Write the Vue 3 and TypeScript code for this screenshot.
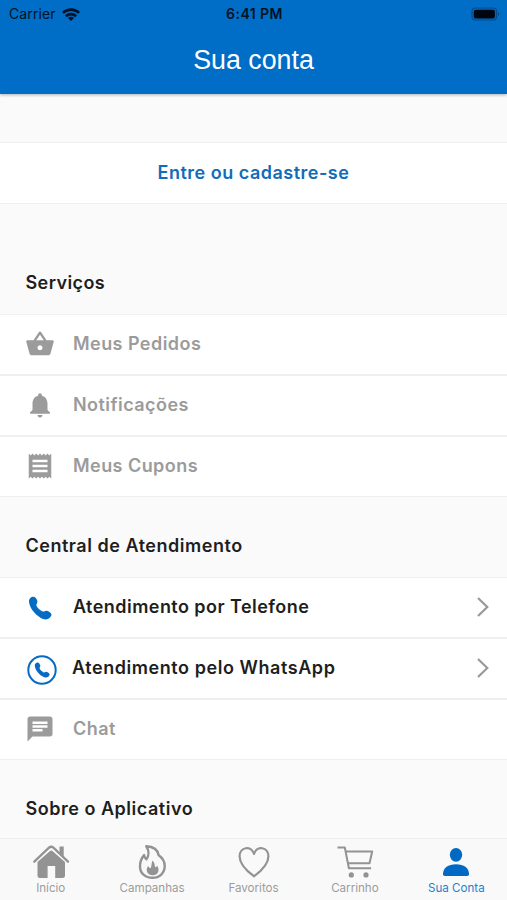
<script setup lang="ts">
type IconName = 'basket' | 'bell' | 'receipt' | 'phone' | 'whatsapp' | 'chat'

interface Row {
  label: string
  icon: IconName
  enabled: boolean
}

interface Section {
  title: string
  key: string
  rows: Row[]
}

const sections: Section[] = [
  {
    title: 'Serviços',
    key: 'services',
    rows: [
      { label: 'Meus Pedidos', icon: 'basket', enabled: false },
      { label: 'Notificações', icon: 'bell', enabled: false },
      { label: 'Meus Cupons', icon: 'receipt', enabled: false },
    ],
  },
  {
    title: 'Central de Atendimento',
    key: 'support',
    rows: [
      { label: 'Atendimento por Telefone', icon: 'phone', enabled: true },
      { label: 'Atendimento pelo WhatsApp', icon: 'whatsapp', enabled: true },
      { label: 'Chat', icon: 'chat', enabled: false },
    ],
  },
  { title: 'Sobre o Aplicativo', key: 'about', rows: [] },
]

const glyphs: Partial<Record<IconName, string>> = {
  basket:
    'M17.21 9l-4.38-6.56c-.19-.28-.51-.42-.83-.42-.32 0-.64.14-.83.43L6.79 9H2c-.55 0-1 .45-1 1 0 .09.01.18.04.27l2.54 9.27c.23.84 1 1.46 1.92 1.46h13c.92 0 1.69-.62 1.93-1.46l2.54-9.27L23 10c0-.55-.45-1-1-1h-4.79zM9 9l3-4.4L15 9H9zm3 8c-1.1 0-2-.9-2-2s.9-2 2-2 2 .9 2 2-.9 2-2 2z',
  bell:
    'M12 22c1.1 0 2-.9 2-2h-4c0 1.1.89 2 2 2zm6-6v-5c0-3.07-1.64-5.64-4.5-6.32V4c0-.83-.67-1.5-1.5-1.5s-1.5.67-1.5 1.5v.68C7.63 5.36 6 7.92 6 11v5l-2 2v1h16v-1l-2-2z',
  receipt:
    'M18 17H6v-2h12v2zm0-4H6v-2h12v2zm0-4H6V7h12v2zM3 22l1.5-1.5L6 22l1.5-1.5L9 22l1.5-1.5L12 22l1.5-1.5L15 22l1.5-1.5L18 22l1.5-1.5L21 22V2l-1.5 1.5L18 2l-1.5 1.5L15 2l-1.5 1.5L12 2l-1.5 1.5L9 2 7.5 3.5 6 2 4.5 3.500 3 2v20z',
  chat:
    'M20 2H4c-1.1 0-1.99.9-1.99 2L2 22l4-4h14c1.1 0 2-.9 2-2V4c0-1.1-.9-2-2-2zM6 9h12v2H6V9zm8 5H6v-2h8v2zm4-6H6V6h12v2z',
}

const handset =
  'M1 5.200C.9 2.700 3.200.6 5.400.7c1.600.1 2.400 1.200 3.100 2.400.8 1.400 1.200 2.500.6 3.900-.5 1.200-1.100 1.700-.5 3 .9 1.800 3.300 4.200 5.500 5.300 1.400.7 2 .1 3.200-.4 1.300-.5 2.500 0 3.800.8 1.500.9 2.500 1.900 2.300 3.400-.3 2.200-2.800 4.300-5.700 4.300C11.700 23.200 1.300 13.700 1 5.200z'

const tabs = [
  { label: 'Início', icon: 'home' },
  { label: 'Campanhas', icon: 'flame' },
  { label: 'Favoritos', icon: 'heart' },
  { label: 'Carrinho', icon: 'cart' },
  { label: 'Sua Conta', icon: 'person', active: true },
]
</script>

<template>
  <div class="screen">
    <header class="header">
      <div class="status">
        <div class="carrier">
          <span>Carrier</span>
          <svg class="wifi" viewBox="0 0 18 13" fill="none" stroke="currentColor" stroke-width="2.700">
            <path d="M.9 4.900a11.600 11.600 0 0 1 16.200 0" />
            <path d="M3.900 8.300a7.300 7.300 0 0 1 10.200 0" />
            <path d="M9 13L6 10a4.200 4.200 0 0 1 6 0z" fill="currentColor" stroke="none" />
          </svg>
        </div>
        <span class="time">6:41 PM</span>
        <div class="power">
          <svg class="battery" viewBox="0 0 29 14">
            <rect x="1" y="1" width="24.500" height="12" rx="3.500" fill="none" stroke="#064b89" stroke-width="1.200" />
            <rect x="2.700" y="2.700" width="21.200" height="8.800" rx="2" fill="#000610" />
            <path d="M27 5v4c1.600-.6 1.600-3.400 0-4z" fill="#064b89" />
          </svg>
        </div>
      </div>
      <h1 class="title">Sua conta</h1>
    </header>

    <main class="content">
      <button class="login"><span>Entre ou cadastre-se</span></button>

      <section v-for="section in sections" :key="section.key" :class="section.key">
        <h2 class="heading"><span>{{ section.title }}</span></h2>
        <ul v-if="section.rows.length" class="rows">
          <li v-for="row in section.rows" :key="row.label" class="row" :class="[row.icon, { enabled: row.enabled }]">
            <span class="icon">
              <svg v-if="row.icon === 'phone'" class="phone-icon" viewBox="0 0 24 24">
                <path :d="handset" fill="currentColor" />
              </svg>
              <svg v-else-if="row.icon === 'whatsapp'" class="ring-icon" viewBox="0 0 30 30">
                <circle cx="15" cy="15" r="13.700" fill="none" stroke="currentColor" stroke-width="2" />
                <path :d="handset" transform="translate(7.100 7.100) scale(.66)" fill="currentColor" />
              </svg>
              <svg v-else class="glyph" viewBox="0 0 24 24">
                <path :d="glyphs[row.icon]" fill="currentColor" />
              </svg>
            </span>
            <span class="label">{{ row.label }}</span>
            <svg v-if="row.enabled" class="chevron" viewBox="0 0 12 20" fill="none" stroke="currentColor" stroke-width="2.200">
              <path d="M1 1l9.300 9L1 19" />
            </svg>
          </li>
        </ul>
      </section>
    </main>

    <nav class="tabs">
      <a v-for="tab in tabs" :key="tab.label" class="tab" :class="[tab.icon, { active: tab.active }]">
        <svg class="tab-icon" viewBox="0 0 38 36">
          <g v-if="tab.icon === 'home'">
            <path d="M2.300 18.700L17 4.700q2.200-2 4.400 0L36 18.700" fill="none" stroke="currentColor" stroke-width="2.300" stroke-linecap="round" />
            <path d="M27.500 3.400h4.200v10l-4.200-4z" fill="currentColor" />
            <path d="M5.500 19L18 8q1.200-1 2.400 0L33 19v13.500q0 2.500-2.500 2.500h-7.300V23h-7.600v12H8q-2.500 0-2.500-2.500z" fill="currentColor" />
          </g>
          <g v-else-if="tab.icon === 'flame'">
            <path d="M13.200 3.200C21.500 3.500 25 8 25.700 12.300c4.600 3.200 6 7.200 6 10.800 0 7-5.100 11.700-12.200 11.700-7.300 0-12.500-4.600-12.500-11.400 0-4.500 1.500-8.300 4.100-11.300.3 2 .9 3.200 2.300 4.200 2.800-3.800 2.700-9-.2-13.100z" fill="none" stroke="currentColor" stroke-width="2.400" stroke-linejoin="round" />
            <path d="M19.400 17.400c3.200 3 1.700 5.400 3.300 7l1.500-1.700c3 4.900.7 9.500-4.400 9.500s-7.900-5-4.700-9.300c.7.900 1.500 2 2.400 2.400 1.300-2 .8-4.900 1.900-7.900z" fill="currentColor" />
          </g>
          <path v-else-if="tab.icon === 'heart'" d="M19 33.300C15 30.300 4.600 22.600 4.600 13.400c0-9.700 11.600-11.200 14.400-2.500C21.800 2.200 33.400 3.700 33.400 13.400 33.400 22.600 23 30.300 19 33.300z" fill="none" stroke="currentColor" stroke-width="2.200" stroke-linejoin="round" />
          <g v-else-if="tab.icon === 'cart'" fill="none" stroke="currentColor" stroke-width="2">
            <path d="M1.500 4.500h7.300l4.100 20.800h22.200M9.500 8.500h26.700l-2.700 11.800H12" stroke-linejoin="round" />
            <circle cx="15.300" cy="31.900" r="2.600" fill="currentColor" stroke="none" />
            <circle cx="30" cy="31.900" r="2.600" fill="currentColor" stroke="none" />
          </g>
          <g v-else fill="currentColor">
            <ellipse cx="19" cy="11.800" rx="6.200" ry="6.900" />
            <path d="M6 31.300c0-6.400 5.200-10 13-10s13 3.600 13 10q0 1.700-2 1.700H8q-2 0-2-1.700z" />
          </g>
        </svg>
        <span class="tab-label">{{ tab.label }}</span>
      </a>
    </nav>
  </div>
</template>

<style>
body {
  margin: 0;
  background: #fafafa;
}
</style>

<style scoped>
* {
  box-sizing: border-box;
}
.screen {
  width: 100%;
  height: 900px;
  display: flex;
  flex-direction: column;
  overflow: hidden;
  background: #fafafa;
  font-family: Inter, "Liberation Sans", sans-serif;
}
.header {
  height: 94px;
  flex: none;
  background: #006dc6;
  box-shadow: 0 1px 3px rgba(0, 0, 0, 0.3);
}
.status {
  height: 27px;
  padding: 0 7px 0 9px;
  display: grid;
  grid-template-columns: 1fr auto 1fr;
  align-items: center;
  color: #001225;
  font-size: 14px;
  line-height: 28px;
}
.carrier {
  display: flex;
  align-items: center;
  gap: 6px;
  letter-spacing: 0.1px;
}
.wifi {
  width: 18px;
  height: 13px;
}
.time {
  font-size: 14px;
  font-weight: 600;
  letter-spacing: 0.45px;
}
.power {
  display: flex;
  justify-content: flex-end;
}
.battery {
  width: 29px;
  height: 14px;
}
.title {
  margin: 0;
  padding-top: 15px;
  text-align: center;
  color: #fff;
  font-family: "Liberation Sans", sans-serif;
  font-size: 26.800px;
  line-height: 36px;
  font-weight: 400;
}
.content {
  flex: 1;
  min-height: 0;
  padding-top: 48px;
}
.login {
  display: block;
  width: 100%;
  height: 62px;
  padding: 0;
  border: solid #efefef;
  border-width: 1px 0;
  background: #fff;
  color: #116cb9;
  font: 600 18px/60px Inter, sans-serif;
  letter-spacing: 0.5px;
}
.heading {
  height: 80px;
  margin: 0;
  padding: 31px 25.500px 0;
  color: #1e1e1e;
  font-size: 18px;
  line-height: 36px;
  font-weight: 600;
  letter-spacing: 0.52px;
}
.services .heading {
  height: 110px;
  padding-top: 61px;
  letter-spacing: 0.4px;
}
.rows {
  margin: 0;
  padding: 0;
  list-style: none;
  border-top: 1px solid #f1f1f1;
}
.row {
  height: 61px;
  padding: 0 18px 1px 25px;
  display: flex;
  align-items: center;
  background: #fff;
  border-bottom: 2px solid #efefef;
  color: #9b9b9b;
}
.row:last-child {
  height: 60px;
  border-bottom-width: 1px;
}
.icon {
  width: 48px;
  display: flex;
  color: #9b9b9b;
}
.glyph {
  width: 30px;
  height: 30px;
}
.enabled .icon {
  color: #066bc2;
}
.phone-icon {
  width: 24px;
  height: 24px;
  margin: 2px 0 0 3px;
}
.ring-icon {
  width: 30px;
  height: 30px;
  margin: 3px 0 0 2px;
}
.label {
  flex: 1;
  font-size: 18px;
  line-height: 24px;
  font-weight: 600;
  letter-spacing: 0.45px;
}
.enabled .label {
  color: #1e1e1e;
}
.whatsapp .label {
  margin-left: -1px;
  letter-spacing: 0.56px;
}
.chevron {
  width: 12px;
  height: 20px;
  color: #999;
}
.tabs {
  height: 62px;
  flex: none;
  display: flex;
  background: #f9f9f9;
  border-top: 1px solid #eee;
}
.tab {
  flex: 1;
  display: flex;
  flex-direction: column;
  align-items: center;
  padding-top: 4px;
  color: #939393;
}
.tab-icon {
  width: 38px;
  height: 36px;
}
.tab-label {
  font-size: 11.600px;
  line-height: 18px;
  color: #9c9c9c;
  white-space: nowrap;
}
.active {
  color: #0069c3;
}
.active .tab-label {
  color: #277fcd;
}
</style>
